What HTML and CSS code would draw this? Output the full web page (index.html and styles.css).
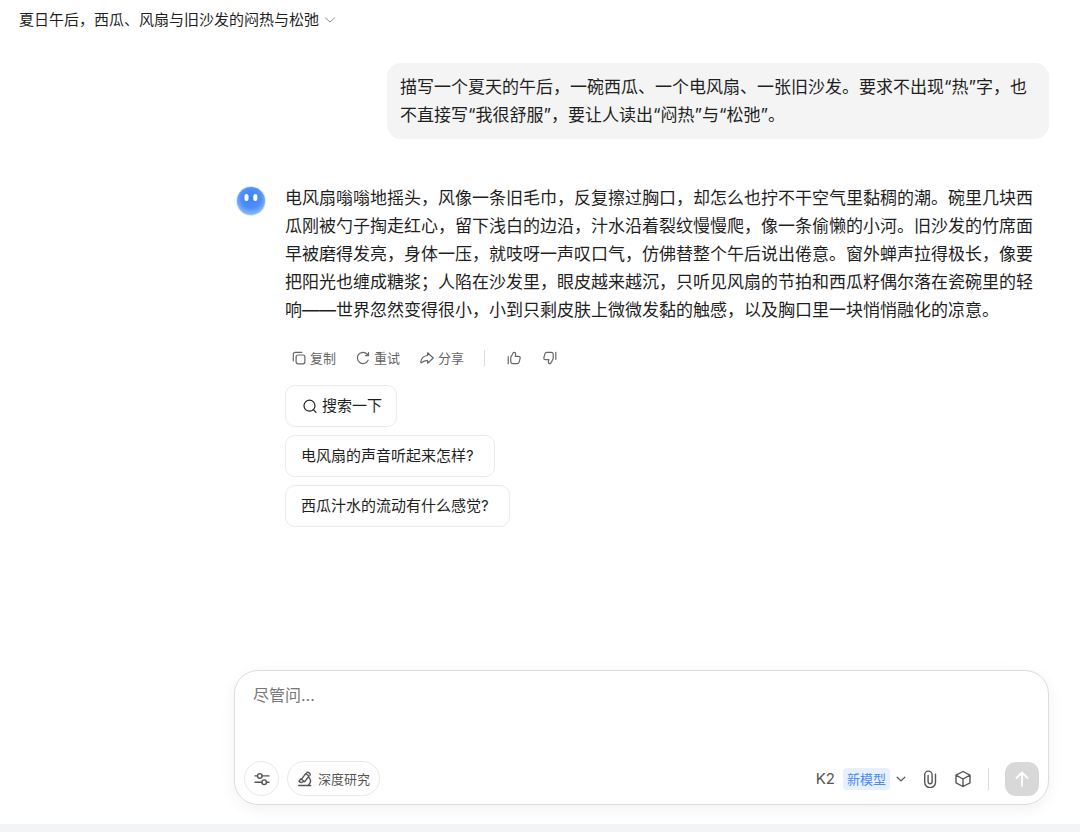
FILE: index.html
```html
<!doctype html>
<html lang="zh-CN">
  <head>
    <meta charset="utf-8" />
    <title>夏日午后，西瓜、风扇与旧沙发的闷热与松弛</title>
    <meta name="viewport" content="width=device-width, initial-scale=1" />
    <link rel="stylesheet" href="styles.css">
  </head>
  <body>
    <header class="topbar">
      <button type="button" class="chat-title">
        夏日午后，西瓜、风扇与旧沙发的闷热与松弛
        <svg class="chevron" width="12" height="12" viewBox="0 0 12 12"><path d="M1.500 4 6 8l4.500-4" /></svg>
      </button>
    </header>
    <main class="chat">
      <section class="messages">
        <div class="bubble">
          <p>描写一个夏天的午后，一碗西瓜、一个电风扇、一张旧沙发。要求不出现“热”字，也不直接写“我很舒服”，要让人读出“闷热”与“松弛”。</p>
        </div>
        <article class="reply">
          <svg class="avatar" width="30" height="30" viewBox="0 0 30 30">
            <defs>
              <radialGradient id="face" cx="50%" cy="40%" r="60%">
                <stop offset="0" stop-color="#3f80fa" />
                <stop offset="0.6" stop-color="#4f8ff9" />
                <stop offset="1" stop-color="#8cbbfb" />
              </radialGradient>
            </defs>
            <circle cx="15" cy="15" r="15" fill="#d9eafd" />
            <circle cx="15" cy="15" r="14" fill="url(#face)" />
            <rect x="8.500" y="8" width="4" height="7" rx="2" fill="#fff" />
            <rect x="17.300" y="8" width="4" height="7" rx="2" fill="#fff" />
          </svg>
          <div class="reply-body">
            <p>电风扇嗡嗡地摇头，风像一条旧毛巾，反复擦过胸口，却怎么也拧不干空气里黏稠的潮。碗里几块西瓜刚被勺子掏走红心，留下浅白的边沿，汁水沿着裂纹慢慢爬，像一条偷懒的小河。旧沙发的竹席面早被磨得发亮，身体一压，就吱呀一声叹口气，仿佛替整个午后说出倦意。窗外蝉声拉得极长，像要把阳光也缠成糖浆；人陷在沙发里，眼皮越来越沉，只听见风扇的节拍和西瓜籽偶尔落在瓷碗里的轻响——世界忽然变得很小，小到只剩皮肤上微微发黏的触感，以及胸口里一块悄悄融化的凉意。</p>
            <div class="actions">
              <button type="button">
                <svg width="14" height="14" viewBox="0 0 14 14"><rect x="4.100" y="4" width="8.800" height="8.800" rx="2" /><path d="M1.300 9.800V3.300a2 2 0 0 1 2-2h6.500" /></svg>
                复制
              </button>
              <button type="button">
                <svg width="14" height="14" viewBox="0 0 14 14"><path d="M12.100 9.200A5.600 5.600 0 1 1 11 3l1.400 1.500M12.500 1.600v3H9.400" /></svg>
                重试
              </button>
              <button type="button">
                <svg width="14" height="14" viewBox="0 0 14 14"><path d="M7.600 1.800 13.300 7l-5.700 5.200V9.600C5.100 9.400 3.300 10.100 1.700 11.600c-.5.400-1 .1-.9-.5C1.300 7.400 4 4.800 7.600 4.500z" /></svg>
                分享
              </button>
              <span class="divider"></span>
              <button type="button" class="rate" aria-label="赞">
                <svg width="14" height="14" viewBox="0 0 14 14"><path d="M1.200 5.700v7M3.800 6.300 6.400 1.500c1.500-.4 2.500.5 2.200 2L8.200 5.300h3.200c1.300 0 2 .9 1.700 2.100l-1 3.800c-.3 1-1 1.500-2 1.500H5.800a2 2 0 0 1-2-2z" /></svg>
              </button>
              <button type="button" class="rate" aria-label="踩">
                <svg width="14" height="14" viewBox="0 0 14 14"><path d="M12.800 8.300v-7M10.200 7.700 7.600 12.500c-1.500.4-2.500-.5-2.200-2l.4-1.800H2.600C1.300 8.700.6 7.800.9 6.600l1-3.800c.3-1 1-1.500 2-1.500h4.300a2 2 0 0 1 2 2z" /></svg>
              </button>
            </div>
            <div class="suggestions">
              <button type="button" class="search">
                <svg width="16" height="16" viewBox="0 0 16 16"><circle cx="7.500" cy="7.700" r="5.500" /><path d="m11.400 11.700 2.600 2.700" /></svg>
                搜索一下
              </button>
              <button type="button">电风扇的声音听起来怎样?</button>
              <button type="button">西瓜汁水的流动有什么感觉?</button>
            </div>
          </div>
        </article>
      </section>
      <form class="composer">
        <textarea aria-label="尽管问" placeholder="尽管问..."></textarea>
        <div class="toolbar">
          <button type="button" class="pill icon-only" aria-label="设置">
            <svg width="16" height="16" viewBox="0 0 16 16"><circle cx="5.800" cy="4.900" r="2.300" /><path d="M1 4.900h2.500M8.100 4.900H15" /><circle cx="10.200" cy="11.200" r="2.300" /><path d="M1 11.200h6.900M12.500 11.200H15" /></svg>
          </button>
          <button type="button" class="pill">
            <svg width="16" height="16" viewBox="0 0 16 16"><path d="M1.700 14.500h12M11.300 14.300c2.500-2.300 2.800-5.400.8-7.700M8.700 2.600 12 5l-4.300 5.700-3.300-2.400zM9.800 1.500c1.500-.7 3.700.9 3.400 2.500M3.700 8 2 10.300c1 1.300 3 1.500 4.200.5" /></svg>
            深度研究
          </button>
          <div class="tools">
            <button type="button" class="model">
              K2
              <span class="tag">新模型</span>
              <svg width="10" height="10" viewBox="0 0 10 10"><path d="M1.200 3.200 5 6.900l3.800-3.700" /></svg>
            </button>
            <button type="button" aria-label="附件">
              <svg width="16" height="18" viewBox="0 0 16 18"><path d="M13.500 4.200v8a5.400 5.400 0 0 1-10.800 0V4.800a3.500 3.500 0 0 1 7.400 0v7a2 2 0 0 1-4 0V5.400M10.100 4.800v7" /></svg>
            </button>
            <button type="button" aria-label="工具">
              <svg width="18" height="18" viewBox="0 0 18 18"><path d="M9 1.500 16 5.200v7.600L9 16.500l-7-3.700V5.200zM2 5.200 9 9l7-3.800M9 9v7.500" /></svg>
            </button>
            <span class="divider"></span>
            <button type="submit" class="send" aria-label="发送">
              <svg width="18" height="18" viewBox="0 0 18 18"><path d="M9 15.800V2.800M3.500 8 9 2.500 14.500 8" /></svg>
            </button>
          </div>
        </div>
      </form>
    </main>
    <footer class="strip"></footer>
  </body>
</html>
```
FILE: styles.css
```css
* {
  box-sizing: border-box;
  margin: 0;
  padding: 0;
}

body {
  display: flex;
  flex-direction: column;
  min-height: 100vh;
  background: #fff;
  color: #1f1f1f;
  font-family: Inter, "Noto Sans CJK SC", sans-serif;
  font-size: 17px;
  line-height: 28px;
}

button {
  display: flex;
  align-items: center;
  border: 0;
  background: none;
  color: inherit;
  font: inherit;
  white-space: nowrap;
  cursor: pointer;
}

svg {
  flex: none;
  fill: none;
  stroke: currentColor;
  stroke-width: 1.2;
  stroke-linecap: round;
  stroke-linejoin: round;
}

.topbar {
  padding: 6px 19px 5px;
}

.chat-title {
  gap: 5px;
  font-size: 15px;
}

.chevron {
  color: #8a8a8a;
  stroke-width: 1;
}

.chat {
  flex: 1;
  display: flex;
  flex-direction: column;
  padding: 24px 31px 19px 234px;
}

.messages {
  flex: 1;
}

.bubble {
  width: fit-content;
  max-width: 662px;
  margin-left: auto;
  padding: 10px 13px;
  border-radius: 14px;
  background: #f4f4f4;
}

.reply {
  display: flex;
  gap: 19px;
  margin: 45px 12px 0 2px;
}

.avatar {
  margin-top: 2px;
  stroke: none;
}

.reply-body {
  flex: 1;
}

.actions {
  display: flex;
  align-items: center;
  gap: 20px;
  margin-top: 20px;
  padding-left: 7px;
  color: #666;
  font-size: 13px;
}

.actions button {
  gap: 4px;
}

.actions .rate {
  margin-left: 2px;
}

.divider {
  width: 1px;
  height: 16px;
  background: #dcdcdc;
}

.suggestions {
  display: flex;
  flex-direction: column;
  align-items: flex-start;
  gap: 8px;
  margin-top: 13px;
}

.suggestions button {
  height: 42px;
  padding: 0 20px 0 15px;
  border: 1px solid #ebebeb;
  border-radius: 10px;
  font-size: 15px;
}

.suggestions .search {
  gap: 4px;
  padding: 0 14px 0 16px;
}

.composer {
  display: flex;
  flex-direction: column;
  padding: 10px 9px 8px;
  border: 1px solid #dcdcdc;
  border-radius: 24px;
  box-shadow: 0 4px 16px rgba(0, 0, 0, 0.06);
}

textarea {
  height: 80px;
  padding: 0 9px;
  border: 0;
  outline: 0;
  resize: none;
  background: none;
  color: inherit;
  font: inherit;
  font-size: 16px;
}

textarea::placeholder {
  color: #777;
}

.toolbar {
  display: flex;
  align-items: center;
  gap: 8px;
  color: #555;
  font-size: 13px;
}

.toolbar svg {
  stroke-width: 1.4;
}

.pill {
  gap: 5px;
  height: 35px;
  padding: 0 9px;
  border: 1px solid #e8e8e8;
  border-radius: 18px;
}

.icon-only {
  justify-content: center;
  width: 35px;
}

.tools {
  display: flex;
  align-items: center;
  gap: 16px;
  margin-left: auto;
}

.model {
  gap: 8px;
  font-size: 15px;
}

.model svg {
  margin-left: -2px;
  stroke-width: 1.2;
}

.tag {
  padding: 0 4px;
  border-radius: 4px;
  background: #e8f0fe;
  color: #4a8bf9;
  font-size: 13px;
  line-height: 22px;
}

.tools .divider {
  height: 22px;
}

.send {
  justify-content: center;
  width: 34px;
  height: 34px;
  border-radius: 11px;
  background: #d8d8d8;
  color: #fff;
}

.send svg {
  stroke-width: 1.8;
}

.strip {
  height: 8px;
  background: #f3f4f5;
}
```
